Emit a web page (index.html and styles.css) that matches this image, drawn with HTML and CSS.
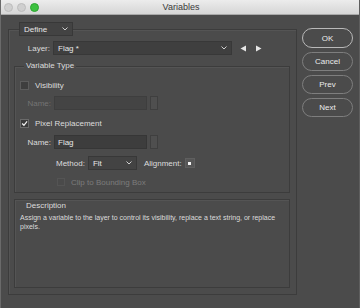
FILE: index.html
```html
<!DOCTYPE html>
<html lang="en">
<head>
    <meta charset="UTF-8">
    <title>Variables</title>
    <link rel="stylesheet" href="styles.css">
</head>
<body>
    <div class="window">
        <div class="titlebar">
            <div class="lights">
                <span class="light"></span>
                <span class="light"></span>
                <span class="light green"></span>
            </div>
            <div class="title">Variables</div>
        </div>

        <div class="content">
            <div class="outer">
                <div class="select define">Define
                    <svg class="chev" width="6" height="4" viewBox="0 0 6 4"><path d="M0.5 0.5 L3 3 L5.5 0.5" fill="none" stroke="#cfcfcf" stroke-width="1"/></svg>
                </div>

                <div class="layer-row">
                    <span class="label layer-label">Layer:</span>
                    <div class="select layer-select">Flag *
                        <svg class="chev" width="6" height="4" viewBox="0 0 6 4"><path d="M0.5 0.5 L3 3 L5.5 0.5" fill="none" stroke="#cfcfcf" stroke-width="1"/></svg>
                    </div>
                    <svg class="arrow" width="7" height="7" viewBox="0 0 7 7"><path d="M6 0.5 L0.5 3.5 L6 6.5 Z" fill="#e6e6e6"/></svg>
                    <svg class="arrow" width="7" height="7" viewBox="0 0 7 7"><path d="M1 0.5 L6.5 3.5 L1 6.5 Z" fill="#e6e6e6"/></svg>
                </div>

                <div class="group">
                    <div class="group-title">Variable Type</div>

                    <div class="check-row first">
                        <span class="checkbox"></span>
                        <span class="label">Visibility</span>
                    </div>

                    <div class="name-row disabled">
                        <span class="label name-label">Name:</span>
                        <div class="input"></div>
                        <div class="mini"></div>
                    </div>

                    <div class="check-row">
                        <span class="checkbox checked">
                            <svg width="9" height="9" viewBox="0 0 9 9"><path d="M1.5 4.5 L3.8 6.8 L7.8 1.8" fill="none" stroke="#f2f2f2" stroke-width="1.6"/></svg>
                        </span>
                        <span class="label">Pixel Replacement</span>
                    </div>

                    <div class="name-row second">
                        <span class="label name-label">Name:</span>
                        <div class="input">Flag</div>
                        <div class="mini"></div>
                    </div>

                    <div class="method-row">
                        <span class="label">Method:</span>
                        <div class="select method-select">Fit
                            <svg class="chev" width="6" height="4" viewBox="0 0 6 4"><path d="M0.5 0.5 L3 3 L5.5 0.5" fill="none" stroke="#cfcfcf" stroke-width="1"/></svg>
                        </div>
                        <span class="label align-label">Alignment:</span>
                        <span class="align-icon"><span class="dot"></span></span>
                    </div>

                    <div class="check-row clip">
                        <span class="checkbox dim"></span>
                        <span class="label dim-text">Clip to Bounding Box</span>
                    </div>
                </div>

                <div class="desc-box">
                    <div class="desc-title">Description</div>
                    <p class="desc-text">Assign a variable to the layer to control its visibility, replace a text string, or replace pixels.</p>
                </div>
            </div>

            <div class="buttons">
                <button class="btn default">OK</button>
                <button class="btn">Cancel</button>
                <button class="btn">Prev</button>
                <button class="btn">Next</button>
            </div>
        </div>
    </div>
</body>
</html>
```

FILE: styles.css
```css
/* General */
body {
    margin: 0;
    padding: 0;
    font-family: "Liberation Sans", Arial, sans-serif;
    background-color: #4b4b4b;
}

.window {
    width: 360px;
    height: 308px;
    background-color: #4b4b4b;
    box-sizing: border-box;
    border-left: 1px solid #6a6a6a;
    border-right: 1px solid #5e5e5e;
    overflow: hidden;
}

/* Title bar */
.titlebar {
    height: 15px;
    background: linear-gradient(#ececec, #d6d6d6);
    border-bottom: 1px solid #a9a9a9;
    box-sizing: border-box;
    display: flex;
    align-items: center;
}

.lights {
    display: flex;
    gap: 4px;
    padding-left: 3px;
}

.light {
    width: 9px;
    height: 9px;
    border-radius: 50%;
    background-color: #cfcfcf;
    border: 0.5px solid #bcbcbc;
    box-sizing: border-box;
}

.light.green {
    background-color: #3cc13f;
    border-color: #2ea532;
}

.title {
    flex: 1;
    text-align: center;
    font-size: 9px;
    color: #3a3a3a;
    margin-right: 36px;
}

/* Content */
.content {
    display: flex;
    padding: 14px 0 0 7px;
    gap: 5px;
}

/* Group boxes */
.outer {
    width: 289px;
    height: 266px;
    box-sizing: border-box;
    border: 1px solid #3c3c3c;
    box-shadow: inset 1px 1px 0 rgba(255, 255, 255, 0.05);
    padding: 0 6px 0 5px;
    display: flex;
    flex-direction: column;
}

.label {
    font-size: 8px;
    color: #dcdcdc;
    white-space: nowrap;
}

/* Dropdowns */
.select {
    height: 14px;
    box-sizing: border-box;
    background-color: #434343;
    border: 1px solid #383838;
    font-size: 8px;
    color: #e6e6e6;
    display: flex;
    align-items: center;
    padding-left: 4px;
    position: relative;
}

.chev {
    position: absolute;
    right: 4px;
    top: 4px;
}

.define {
    width: 54px;
    margin: -8px 0 0 5px;
}

.layer-row {
    display: flex;
    align-items: center;
    margin-top: 5px;
    height: 14px;
}

.layer-label {
    width: 36px;
    text-align: right;
}

.layer-select {
    width: 179px;
    margin-left: 3px;
    background-color: #3f3f3f;
}

.arrow {
    margin-left: 8px;
}

/* Variable Type */
.group {
    margin-top: 11px;
    height: 127px;
    box-sizing: border-box;
    border: 1px solid #3c3c3c;
    box-shadow: inset 1px 1px 0 rgba(255, 255, 255, 0.05);
    padding: 0 5px;
    display: flex;
    flex-direction: column;
}

.group-title {
    align-self: flex-start;
    margin: -6px 0 0 4px;
    padding: 0 2px;
    background-color: #4b4b4b;
    font-size: 8px;
    line-height: 10px;
    color: #dcdcdc;
}

.check-row {
    display: flex;
    align-items: center;
    gap: 6px;
    height: 12px;
    margin-top: 7px;
}

.check-row.first {
    margin-top: 8px;
}

.checkbox {
    width: 9px;
    height: 9px;
    box-sizing: border-box;
    background-color: #3e3e3e;
    border: 1px solid #5c5c5c;
    display: flex;
    align-items: center;
    justify-content: center;
}

.checkbox svg {
    display: block;
}

.checkbox.checked {
    border-color: #6a6a6a;
    background-color: #3a3a3a;
}

.checkbox.dim {
    width: 8px;
    height: 8px;
    background-color: #4a4a4a;
    border-color: #545454;
}

.dim-text {
    color: #7c7c7c;
}

.clip {
    margin-top: 6px;
    padding-left: 37px;
}

.name-row {
    display: flex;
    align-items: center;
    height: 14px;
    margin-top: 5px;
}

.name-row.second {
    margin-top: 6px;
}

.name-label {
    width: 31px;
    text-align: right;
}

.input {
    width: 93px;
    height: 14px;
    box-sizing: border-box;
    margin-left: 3px;
    background-color: #3d3d3d;
    border: 1px solid #363636;
    font-size: 8px;
    color: #e8e8e8;
    padding-left: 3px;
    display: flex;
    align-items: center;
}

.mini {
    width: 8px;
    height: 14px;
    box-sizing: border-box;
    margin-left: 3px;
    background-color: #4f4f4f;
    border: 1px solid #3f3f3f;
}

.disabled .label {
    color: #747474;
}

.disabled .input {
    background-color: #444444;
    border-color: #3e3e3e;
}

.method-row {
    display: flex;
    align-items: center;
    height: 14px;
    margin-top: 7px;
    padding-left: 36px;
}

.method-select {
    width: 49px;
    margin-left: 3px;
}

.align-label {
    margin-left: 7px;
}

.align-icon {
    width: 10px;
    height: 10px;
    margin-left: 3px;
    box-sizing: border-box;
    background-color: #565656;
    border: 1px solid #5f5f5f;
    display: flex;
    align-items: center;
    justify-content: center;
}

.dot {
    width: 3px;
    height: 3px;
    background-color: #f4f4f4;
}

/* Description */
.desc-box {
    margin-top: 6px;
    height: 89px;
    box-sizing: border-box;
    border: 1px solid #3c3c3c;
    box-shadow: inset 1px 1px 0 rgba(255, 255, 255, 0.05);
    padding: 1px 5px 0 5px;
}

.desc-title {
    font-size: 8px;
    color: #dcdcdc;
    line-height: 10px;
    padding-left: 6px;
}

.desc-text {
    margin: 2px 0 0 0;
    font-size: 7px;
    line-height: 9px;
    color: #dcdcdc;
}

/* Buttons */
.buttons {
    display: flex;
    flex-direction: column;
    gap: 4px;
    padding-top: 13px;
    margin-top: -14px;
}

.btn {
    width: 51px;
    height: 19px;
    border-radius: 10px;
    border: 1px solid #7e7e7e;
    background-color: #4b4b4b;
    color: #ececec;
    font-family: "Liberation Sans", Arial, sans-serif;
    font-size: 8px;
    padding: 0;
}

.btn.default {
    border: 1.5px solid #b9b9b9;
    height: 20px;
}
```
